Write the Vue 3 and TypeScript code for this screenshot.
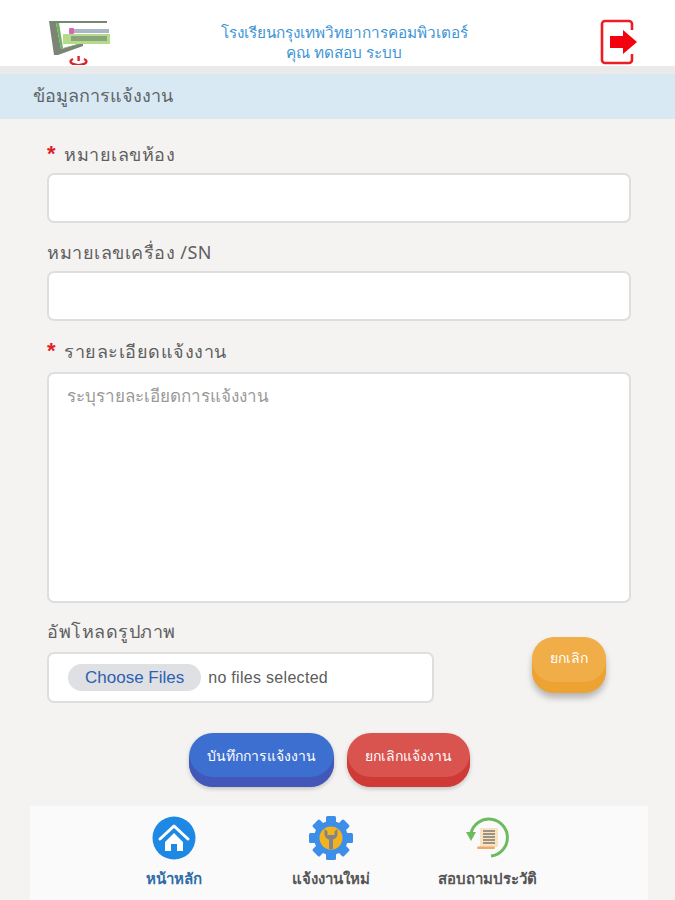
<script setup lang="ts">
const navItems = [
  { key: 'home', label: 'หน้าหลัก', active: true },
  { key: 'new', label: 'แจ้งงานใหม่', active: false },
  { key: 'history', label: 'สอบถามประวัติ', active: false },
];
const gearTeeth = [0, 45, 90, 135, 180, 225, 270, 315];
</script>

<template>
  <div class="page">
    <header class="top">
      <div class="logo">
        <svg width="62" height="46" viewBox="0 0 62 46">
          <path d="M0 2H58V4H7L12 30 34 24 34 27 9 36 5 36Z" fill="#7b8576" />
          <path d="M7 4H10L14 29 34 23.5V24.5L12 30Z" fill="#6fb05c" />
          <rect x="20" y="9" width="5" height="6" rx="1" fill="#d866b4" />
          <rect x="25" y="10" width="35" height="4" fill="#a8b6c6" />
          <rect x="14" y="15" width="47" height="10" fill="#b4da8c" />
          <rect x="22" y="17" width="36" height="5" fill="#8aa47c" />
          <path d="M24 40a8 3.4 0 1 0 11 0" fill="none" stroke="#d9262c" stroke-width="2.4" />
          <rect x="28.4" y="37" width="2.4" height="5" fill="#d9262c" />
        </svg>
      </div>
      <div class="school">
        <div>โรงเรียนกรุงเทพวิทยาการคอมพิวเตอร์</div>
        <div>คุณ ทดสอบ ระบบ</div>
      </div>
      <svg class="logout" width="38" height="46" viewBox="0 0 38 46">
        <path d="M32 11V5a3 3 0 0 0-3-3H5a3 3 0 0 0-3 3v36a3 3 0 0 0 3 3h24a3 3 0 0 0 3-3v-6" fill="none" stroke="#ee1c25" stroke-width="2.6" />
        <path d="M10 17H23V11L37 23 23 35V29H10Z" fill="#f5000f" />
      </svg>
    </header>
    <div class="strip"></div>
    <div class="title-bar">ข้อมูลการแจ้งงาน</div>

    <form class="form" @submit.prevent>
      <label class="lbl"><span class="req">*</span>หมายเลขห้อง</label>
      <input class="box" type="text" />

      <label class="lbl second">หมายเลขเครื่อง /SN</label>
      <input class="box" type="text" />

      <label class="lbl third"><span class="req">*</span>รายละเอียดแจ้งงาน</label>
      <textarea class="box area" placeholder="ระบุรายละเอียดการแจ้งงาน"></textarea>

      <div class="upload-row">
        <div class="upload-left">
          <label class="lbl upload-lbl">อัพโหลดรูปภาพ</label>
          <div class="box file">
            <span class="choose">Choose Files</span>
            <span class="none">no files selected</span>
          </div>
        </div>
        <button type="button" class="btn orange">ยกเลิก</button>
      </div>

      <div class="actions">
        <button type="submit" class="btn blue">บันทึกการแจ้งงาน</button>
        <button type="button" class="btn red">ยกเลิกแจ้งงาน</button>
      </div>
    </form>

    <nav class="bottom">
      <a v-for="item in navItems" :key="item.key" class="nav-item" :class="{ active: item.active }">
        <svg v-if="item.key === 'home'" width="44" height="44" viewBox="0 0 44 44">
          <circle cx="22" cy="22" r="21.5" fill="#1e88e5" />
          <path d="M8 23 22 10 36 23" fill="none" stroke="#fff" stroke-width="3" stroke-linejoin="round" stroke-linecap="round" />
          <path d="M13 26 22 17 31 26V35H25V28H19V35H13Z" fill="#fff" />
        </svg>
        <svg v-else-if="item.key === 'new'" width="44" height="44" viewBox="0 0 44 44">
          <rect v-for="a in gearTeeth" :key="a" x="17" y="0" width="10" height="10" rx="1.5" fill="#3d8ee8" :transform="`rotate(${a} 22 22)`" />
          <circle cx="22" cy="22" r="17" fill="#3d8ee8" />
          <circle cx="22" cy="22" r="11.5" fill="#f5b21f" />
          <path d="M15.5 13v5a6 6 0 0 0 4.5 5.4V33h4V23.4A6 6 0 0 0 28.5 18v-5l-3 2.4V19h-7v-3.6Z" fill="#80858a" />
        </svg>
        <svg v-else width="44" height="44" viewBox="0 0 44 44">
          <path d="M5 17A18.5 18.5 0 1 1 25 40" fill="none" stroke="#6dbb5e" stroke-width="3" />
          <path d="M0 16H10L5 25Z" fill="#6dbb5e" />
          <rect x="14" y="12" width="18" height="19" fill="#f8e3c0" />
          <path d="M17 15H29M17 18H29M17 21H29M17 24H29M17 27H29" stroke="#7f7a70" stroke-width="1.6" />
          <rect x="11" y="30.5" width="18" height="2.4" rx="1.2" fill="#f3a66b" />
        </svg>
        <span>{{ item.label }}</span>
      </a>
    </nav>
  </div>
</template>

<style scoped>
.page {
  width: 675px;
  height: 900px;
  overflow: hidden;
  background: #f4f3f2;
  font-family: "Noto Sans", "DejaVu Sans", "Liberation Sans", sans-serif;
  color: #555;
  display: flex;
  flex-direction: column;
}

.top {
  box-sizing: border-box;
  height: 66px;
  padding-top: 17px;
  background: #fff;
  display: flex;
  align-items: center;
  flex: none;
}

.logo {
  width: 62px;
  margin-left: 49px;
  height: 46px;
}

.school {
  width: 370px;
  margin-left: 48px;
  text-align: center;
  color: #3d94d6;
  font-size: 15.3px;
  line-height: 20px;
}

.logout {
  margin-left: 71px;
  flex: none;
}

.strip {
  height: 8px;
  background: #ebeaea;
  flex: none;
}

.title-bar {
  height: 45px;
  background: #d8e9f3;
  padding-left: 33px;
  line-height: 43px;
  font-size: 18px;
  color: #5e6468;
  flex: none;
}

.form {
  padding: 21px 44px 0 47px;
  display: flex;
  flex-direction: column;
  flex: 1;
}

.lbl {
  display: block;
  font-size: 18px;
  line-height: 28px;
  height: 33px;
  letter-spacing: 0.5px;
  color: #5f5f5f;
}

.second { margin-top: 15px; }
.third { margin-top: 16px; height: 35px; }
.upload-lbl { height: 35px; }

.req {
  color: #e0202a;
  font-family: "Liberation Sans", sans-serif;
  font-weight: 700;
  font-size: 22px;
  margin-right: 8px;
}

.box {
  display: block;
  box-sizing: border-box;
  width: 100%;
  height: 50px;
  background: #fff;
  border: 2px solid #dedede;
  border-radius: 7px;
  outline: none;
  font-family: inherit;
}

.area {
  height: 231px;
  resize: none;
  padding: 8px 18px;
  font-size: 17px;
}

.area::placeholder {
  color: #999;
}

.upload-row {
  display: flex;
  align-items: flex-start;
  margin-top: 14px;
}

.upload-left {
  width: 387px;
}

.file {
  height: 51px;
  display: flex;
  align-items: center;
  gap: 7px;
  padding-left: 19px;
  font-family: "Liberation Sans", sans-serif;
}

.choose {
  background: #dfe0e4;
  color: #2e5fb0;
  border-radius: 14px;
  font-size: 17px;
  line-height: 27px;
  padding: 0 17px;
}

.none {
  color: #5c5c5c;
  font-size: 16px;
  letter-spacing: 0.3px;
}

.btn {
  border: none;
  font-family: inherit;
  color: #fff;
  font-size: 14px;
  padding: 0;
}

.orange {
  width: 74px;
  height: 56px;
  margin: 20px 0 0 98px;
  background: #f0ad48;
  border-radius: 22px;
  padding-bottom: 14px;
  box-shadow: inset 0 -11px 0 #eda331, 0 5px 6px rgba(0, 0, 0, 0.25);
}

.actions {
  display: flex;
  justify-content: center;
  gap: 13px;
  margin: 30px 0 0 -19px;
}

.blue,
.red {
  height: 54px;
  border-radius: 24px;
  padding-bottom: 8px;
}

.blue {
  width: 145px;
  background: #3c6fd0;
  box-shadow: inset 0 -10px 0 #4257b8, 0 2px 4px rgba(0, 0, 0, 0.2);
}

.red {
  width: 123px;
  background: #d9534f;
  box-shadow: inset 0 -10px 0 #d03a36, 0 2px 4px rgba(0, 0, 0, 0.2);
}

.bottom {
  height: 94px;
  margin: 0 27px 0 30px;
  background: #fafafa;
  display: flex;
  flex: none;
}

.nav-item {
  width: 157px;
  display: flex;
  flex-direction: column;
  align-items: center;
  padding-top: 10px;
  font-size: 15px;
  font-weight: 600;
  color: #555;
}

.nav-item:first-child {
  margin-left: 65px;
}

.nav-item span {
  margin-top: 7px;
}

.nav-item.active {
  color: #2f6ca8;
}
</style>
